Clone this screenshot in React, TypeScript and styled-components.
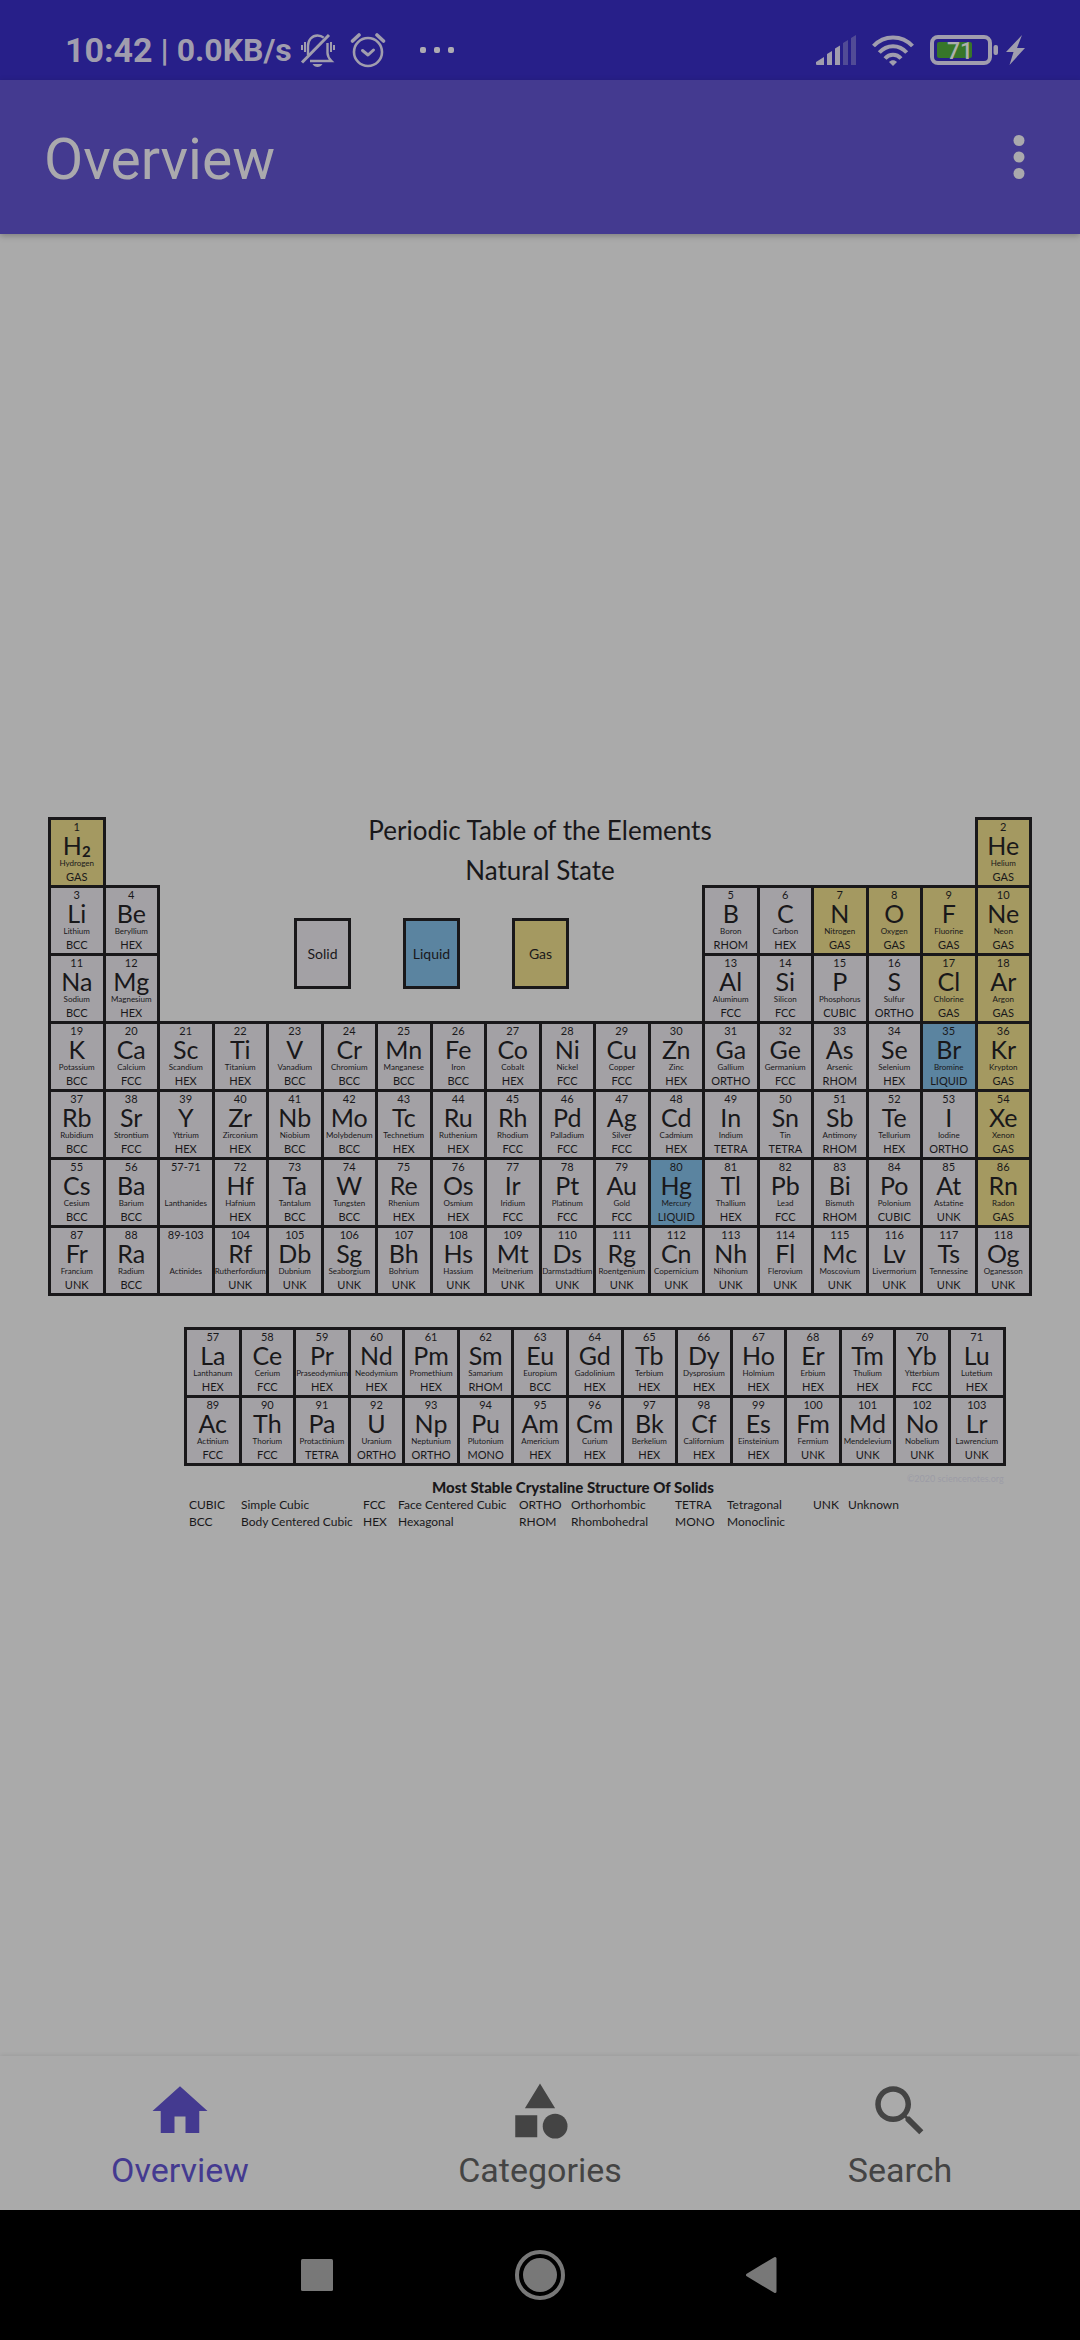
import React from "react";
import styled, { createGlobalStyle } from "styled-components";

type State = "solid" | "liquid" | "gas";

const fills: Record<State, string> = {
  solid: "#a3a1a5",
  liquid: "#5b84a0",
  gas: "#a49961",
};

const ink = "#19181a";
const accent = "#443a90";

const GlobalStyle = createGlobalStyle`
  * { box-sizing: border-box; }
  body { margin: 0; background: #aaaaaa; font-family: Roboto, "Liberation Sans", sans-serif; }
  button { margin: 0; padding: 0; border: 0; background: none; font: inherit; color: inherit; cursor: pointer; }
`;

const Screen = styled.div`
  display: flex;
  flex-direction: column;
  min-height: 100vh;
`;

const StatusBar = styled.div`
  display: flex;
  align-items: center;
  justify-content: space-between;
  height: 80px;
  padding: 20px 55px 0 65px;
  background: #271f89;
  color: #a09dae;
`;

const StatusGroup = styled.div<{ $gap: number }>`
  display: flex;
  align-items: center;
  gap: ${(p) => p.$gap}px;
  svg { display: block; }
`;

const Clock = styled.span`
  font-size: 34px;
  line-height: 40px;
  font-weight: 700;
`;

const Speed = styled.span`
  font-size: 32px;
  line-height: 40px;
  font-weight: 700;
`;

const AppBar = styled.header`
  z-index: 1;
  display: flex;
  align-items: center;
  justify-content: space-between;
  height: 154px;
  padding: 0 28px 0 44px;
  background: ${accent};
  color: #aaa9ad;
  box-shadow: 0 2px 6px rgba(0, 0, 0, 0.25);
`;

const Title = styled.h1`
  margin: 0;
  padding-top: 6px;
  font-size: 57px;
  line-height: 72px;
  font-weight: 400;
`;

const MenuButton = styled.button`
  display: flex;
  svg { display: block; }
`;

const Main = styled.main`
  flex: 1;
  display: flex;
  flex-direction: column;
  justify-content: center;
  padding: 56px 48px 0;
  font-family: Lato, "Liberation Sans", sans-serif;
  color: ${ink};
`;

const Elements = styled.table`
  width: 100%;
  table-layout: fixed;
  border-collapse: collapse;
`;

const Row = styled.tr`
  height: 68px;
`;

const Cell = styled.td<{ $state: State }>`
  padding: 0;
  border: 3px solid ${ink};
  background: ${(p) => fills[p.$state]};
  text-align: center;
  vertical-align: top;
  white-space: nowrap;
`;

const Blank = styled.td`
  padding: 0;
`;

const Num = styled.div`
  font-size: 11px;
  line-height: 13px;
`;

const Sym = styled.div`
  display: flex;
  align-items: flex-start;
  justify-content: center;
  font-size: 25px;
  line-height: 25px;
`;

const Count = styled.sub`
  padding-top: 12px;
  font-size: 15px;
  line-height: 13px;
  font-weight: 700;
`;

const Name = styled.div`
  font-size: 8px;
  line-height: 11px;
`;

const Kind = styled.div`
  font-size: 11px;
  line-height: 15px;
`;

const HeadingCell = styled(Blank)`
  vertical-align: top;
`;

const Heading = styled.h2`
  margin: 0;
  font-size: 26px;
  line-height: 25px;
  font-weight: 400;
  text-align: center;
  & + & { margin-top: 15px; }
`;

const Swatches = styled.div`
  display: flex;
  gap: 52px;
  padding-left: 134px;
`;

const Swatch = styled.div<{ $state: State }>`
  display: flex;
  align-items: center;
  justify-content: center;
  width: 57px;
  height: 71px;
  border: 3px solid ${ink};
  background: ${(p) => fills[p.$state]};
  font-size: 14px;
`;

const Series = styled.section`
  width: 83.5%;
  margin: 31px 0 0 136px;
`;

const Caption = styled.div`
  display: flex;
  align-items: flex-start;
  justify-content: space-between;
  padding: 6px 2px 0 248px;
`;

const CaptionTitle = styled.h3`
  margin: 0;
  padding-top: 6px;
  font-size: 15px;
  line-height: 18px;
  font-weight: 900;
`;

const Copyright = styled.small`
  font-size: 9px;
  line-height: 14px;
  color: #9c9ca6;
`;

const Glossary = styled.dl`
  display: grid;
  grid-template-columns: 52px 122px 35px 121px 52px 104px 52px 86px 35px auto;
  margin: 0;
  padding-left: 5px;
  font-size: 12px;
  line-height: 17px;
  white-space: nowrap;
  dd { margin: 0; }
`;

const BottomNav = styled.nav`
  display: grid;
  grid-template-columns: repeat(3, 1fr);
  height: 154px;
  background: #aaaaaa;
  box-shadow: 0 -1px 4px rgba(0, 0, 0, 0.08);
`;

const NavItem = styled.button<{ $active?: boolean }>`
  display: flex;
  flex-direction: column;
  align-items: center;
  padding-top: 22px;
  color: ${(p) => (p.$active ? accent : "#444444")};
  font-size: 34px;
  line-height: 40px;
  svg { display: block; margin-bottom: 6px; }
`;

const SystemNav = styled.div`
  display: flex;
  align-items: center;
  justify-content: center;
  gap: 170px;
  height: 130px;
  background: #000;
  color: #787878;
  svg { display: block; }
`;

// [number, symbol, name, structure]
type El = [string, string, string, string];

const parse = (text: string): El[] =>
  text
    .trim()
    .split(/\s+/)
    .map((item) => item.split("/") as El);

const period1 = parse("1/H/Hydrogen/GAS 2/He/Helium/GAS");
const period2 = parse(
  "3/Li/Lithium/BCC 4/Be/Beryllium/HEX 5/B/Boron/RHOM 6/C/Carbon/HEX 7/N/Nitrogen/GAS 8/O/Oxygen/GAS 9/F/Fluorine/GAS 10/Ne/Neon/GAS"
);
const period3 = parse(
  "11/Na/Sodium/BCC 12/Mg/Magnesium/HEX 13/Al/Aluminum/FCC 14/Si/Silicon/FCC 15/P/Phosphorus/CUBIC 16/S/Sulfur/ORTHO 17/Cl/Chlorine/GAS 18/Ar/Argon/GAS"
);
const longPeriods = [
  "19/K/Potassium/BCC 20/Ca/Calcium/FCC 21/Sc/Scandium/HEX 22/Ti/Titanium/HEX 23/V/Vanadium/BCC 24/Cr/Chromium/BCC 25/Mn/Manganese/BCC 26/Fe/Iron/BCC 27/Co/Cobalt/HEX 28/Ni/Nickel/FCC 29/Cu/Copper/FCC 30/Zn/Zinc/HEX 31/Ga/Gallium/ORTHO 32/Ge/Germanium/FCC 33/As/Arsenic/RHOM 34/Se/Selenium/HEX 35/Br/Bromine/LIQUID 36/Kr/Krypton/GAS",
  "37/Rb/Rubidium/BCC 38/Sr/Strontium/FCC 39/Y/Yttrium/HEX 40/Zr/Zirconium/HEX 41/Nb/Niobium/BCC 42/Mo/Molybdenum/BCC 43/Tc/Technetium/HEX 44/Ru/Ruthenium/HEX 45/Rh/Rhodium/FCC 46/Pd/Palladium/FCC 47/Ag/Silver/FCC 48/Cd/Cadmium/HEX 49/In/Indium/TETRA 50/Sn/Tin/TETRA 51/Sb/Antimony/RHOM 52/Te/Tellurium/HEX 53/I/Iodine/ORTHO 54/Xe/Xenon/GAS",
  "55/Cs/Cesium/BCC 56/Ba/Barium/BCC 57-71//Lanthanides/ 72/Hf/Hafnium/HEX 73/Ta/Tantalum/BCC 74/W/Tungsten/BCC 75/Re/Rhenium/HEX 76/Os/Osmium/HEX 77/Ir/Iridium/FCC 78/Pt/Platinum/FCC 79/Au/Gold/FCC 80/Hg/Mercury/LIQUID 81/Tl/Thallium/HEX 82/Pb/Lead/FCC 83/Bi/Bismuth/RHOM 84/Po/Polonium/CUBIC 85/At/Astatine/UNK 86/Rn/Radon/GAS",
  "87/Fr/Francium/UNK 88/Ra/Radium/BCC 89-103//Actinides/ 104/Rf/Rutherfordium/UNK 105/Db/Dubnium/UNK 106/Sg/Seaborgium/UNK 107/Bh/Bohrium/UNK 108/Hs/Hassium/UNK 109/Mt/Meitnerium/UNK 110/Ds/Darmstadtium/UNK 111/Rg/Roentgenium/UNK 112/Cn/Copernicium/UNK 113/Nh/Nihonium/UNK 114/Fl/Flerovium/UNK 115/Mc/Moscovium/UNK 116/Lv/Livermorium/UNK 117/Ts/Tennessine/UNK 118/Og/Oganesson/UNK",
].map(parse);
const series = [
  "57/La/Lanthanum/HEX 58/Ce/Cerium/FCC 59/Pr/Praseodymium/HEX 60/Nd/Neodymium/HEX 61/Pm/Promethium/HEX 62/Sm/Samarium/RHOM 63/Eu/Europium/BCC 64/Gd/Gadolinium/HEX 65/Tb/Terbium/HEX 66/Dy/Dysprosium/HEX 67/Ho/Holmium/HEX 68/Er/Erbium/HEX 69/Tm/Thulium/HEX 70/Yb/Ytterbium/FCC 71/Lu/Lutetium/HEX",
  "89/Ac/Actinium/FCC 90/Th/Thorium/FCC 91/Pa/Protactinium/TETRA 92/U/Uranium/ORTHO 93/Np/Neptunium/ORTHO 94/Pu/Plutonium/MONO 95/Am/Americium/HEX 96/Cm/Curium/HEX 97/Bk/Berkelium/HEX 98/Cf/Californium/HEX 99/Es/Einsteinium/HEX 100/Fm/Fermium/UNK 101/Md/Mendelevium/UNK 102/No/Nobelium/UNK 103/Lr/Lawrencium/UNK",
].map(parse);

const glossary: [string, string][] = [
  ["CUBIC", "Simple Cubic"],
  ["FCC", "Face Centered Cubic"],
  ["ORTHO", "Orthorhombic"],
  ["TETRA", "Tetragonal"],
  ["UNK", "Unknown"],
  ["BCC", "Body Centered Cubic"],
  ["HEX", "Hexagonal"],
  ["RHOM", "Rhombohedral"],
  ["MONO", "Monoclinic"],
];

const stateOf = (kind: string): State =>
  kind === "GAS" ? "gas" : kind === "LIQUID" ? "liquid" : "solid";

function ElementCell({ el: [num, sym, name, kind] }: { el: El }) {
  return (
    <Cell $state={stateOf(kind)}>
      <Num>{num}</Num>
      <Sym>
        {sym || "\u00a0"}
        {sym === "H" && <Count>2</Count>}
      </Sym>
      <Name>{name}</Name>
      <Kind>{kind}</Kind>
    </Cell>
  );
}

const cells = (els: El[]) => els.map((el) => <ElementCell key={el[0]} el={el} />);

function BellOffIcon() {
  return (
    <svg width="36" height="34" viewBox="0 0 36 34" fill="none" stroke="currentColor" strokeWidth="2.4">
      <path d="M8 22V13c0-6 4-10.500 9.500-10.500 2.500 0 4.600.8 6.200 2.200M27.500 10v10c0 4 1.500 5.500 4 8H10" />
      <path d="M2 29.500 29 2" strokeWidth="3" />
      <path d="M12.500 31h10c-1 2-3 3-5 3s-4-1-5-3z" fill="currentColor" stroke="none" />
      <path d="M5 9v10M2 12v5M31 9v10M34 12v5" strokeWidth="2" />
    </svg>
  );
}

function AlarmIcon() {
  return (
    <svg width="36" height="36" viewBox="0 0 36 36" fill="none" stroke="currentColor" strokeWidth="2.600" strokeLinecap="round" strokeLinejoin="round">
      <circle cx="18" cy="20" r="14" />
      <path d="M12.500 18.500l5.500 4.500 5.500-5" strokeWidth="3" />
      <path d="M2.500 9 9 3M27 3l6.500 6" strokeWidth="3.600" />
    </svg>
  );
}

function MoreDots() {
  return (
    <svg width="34" height="6" viewBox="0 0 34 6" fill="#adabb2">
      <rect width="6" height="6" rx="2" />
      <rect x="14" width="6" height="6" rx="2" />
      <rect x="28" width="6" height="6" rx="2" />
    </svg>
  );
}

function SignalIcon() {
  return (
    <svg width="40" height="30" viewBox="0 0 40 30" fill="currentColor">
      <path d="M0 27l8-5v8H1q-1 0-1-1zM11 19l5-3v14h-5zM19 13.500l5-3V30h-5z" />
      <path d="M27 8l5-3v25h-5zM35 3l5-3v30h-5z" opacity="0.350" />
    </svg>
  );
}

function WifiIcon() {
  return (
    <svg width="42" height="31" viewBox="0 0 42 31" fill="none" stroke="currentColor" strokeWidth="4">
      <path d="M1.500 11C12 -.5 30 -.5 40.500 11" />
      <path d="M7.300 17.500c7.600-8.500 19.800-8.500 27.400 0" />
      <path d="M13 23.500c4.500-5 11.500-5 16 0" />
      <path d="M17 27c2.400-2.500 5.600-2.500 8 0l-4 4z" fill="currentColor" stroke="none" />
    </svg>
  );
}

function BatteryIcon() {
  return (
    <svg width="68" height="30" viewBox="0 0 68 30">
      <rect x="2" y="2" width="58" height="26" rx="6" fill="none" stroke="currentColor" strokeWidth="4" />
      <rect x="7" y="7" width="35" height="16" rx="2" fill="#37762a" />
      <rect x="63.500" y="10" width="4.500" height="10" rx="2" fill="currentColor" />
      <text x="30" y="24" textAnchor="middle" fontFamily="Roboto, sans-serif" fontSize="23" fontWeight="500" fill="#adb0ae">71</text>
    </svg>
  );
}

function BoltIcon() {
  return (
    <svg width="19" height="30" viewBox="0 0 19 30" fill="currentColor">
      <path d="M16 0 0 17h7.500L3.500 30 19 13h-8z" />
    </svg>
  );
}

export default function App() {
  return (
    <Screen>
      <GlobalStyle />
      <StatusBar>
        <StatusGroup $gap={34}>
          <StatusGroup $gap={14}>
            <StatusGroup $gap={8}>
              <Clock>10:42</Clock>
              <Speed>| 0.0KB/s</Speed>
              <BellOffIcon />
            </StatusGroup>
            <AlarmIcon />
          </StatusGroup>
          <MoreDots />
        </StatusGroup>
        <StatusGroup $gap={16}>
          <SignalIcon />
          <WifiIcon />
          <StatusGroup $gap={8}>
            <BatteryIcon />
            <BoltIcon />
          </StatusGroup>
        </StatusGroup>
      </StatusBar>

      <AppBar>
        <Title>Overview</Title>
        <MenuButton aria-label="More options">
          <svg width="66" height="66" viewBox="0 0 24 24" fill="currentColor">
            <circle cx="12" cy="6" r="2" />
            <circle cx="12" cy="12" r="2" />
            <circle cx="12" cy="18" r="2" />
          </svg>
        </MenuButton>
      </AppBar>

      <Main>
        <Elements>
          <tbody>
            <Row>
              {cells(period1.slice(0, 1))}
              <HeadingCell colSpan={16}>
                <Heading>Periodic Table of the Elements</Heading>
                <Heading as="p">Natural State</Heading>
              </HeadingCell>
              {cells(period1.slice(1))}
            </Row>
            <Row>
              {cells(period2.slice(0, 2))}
              <Blank colSpan={10} rowSpan={2}>
                <Swatches>
                  <Swatch $state="solid">Solid</Swatch>
                  <Swatch $state="liquid">Liquid</Swatch>
                  <Swatch $state="gas">Gas</Swatch>
                </Swatches>
              </Blank>
              {cells(period2.slice(2))}
            </Row>
            <Row>{cells(period3)}</Row>
            {longPeriods.map((els) => (
              <Row key={els[0][0]}>{cells(els)}</Row>
            ))}
          </tbody>
        </Elements>

        <Series>
          <Elements>
            <tbody>
              {series.map((els) => (
                <Row key={els[0][0]}>{cells(els)}</Row>
              ))}
            </tbody>
          </Elements>
          <Caption>
            <CaptionTitle>Most Stable Crystaline Structure Of Solids</CaptionTitle>
            <Copyright>©2020 sciencenotes.org</Copyright>
          </Caption>
          <Glossary>
            {glossary.map(([term, meaning]) => (
              <React.Fragment key={term}>
                <dt>{term}</dt>
                <dd>{meaning}</dd>
              </React.Fragment>
            ))}
          </Glossary>
        </Series>
      </Main>

      <BottomNav>
        <NavItem $active aria-current="page">
          <svg width="66" height="66" viewBox="0 0 24 24" fill="currentColor">
            <path d="M10 20v-6h4v6h5v-8h3L12 3 2 12h3v8z" />
          </svg>
          Overview
        </NavItem>
        <NavItem>
          <svg width="66" height="66" viewBox="0 0 24 24" fill="currentColor">
            <path d="M12 2l-5.500 9h11zM3 13.500h8v8H3z" />
            <circle cx="17.500" cy="17.500" r="4.500" />
          </svg>
          Categories
        </NavItem>
        <NavItem>
          <svg width="66" height="66" viewBox="0 0 24 24" fill="currentColor">
            <path d="M15.500 14h-.79l-.28-.27C15.410 12.590 16 11.110 16 9.500 16 5.910 13.090 3 9.500 3S3 5.910 3 9.500 5.910 16 9.500 16c1.610 0 3.090-.59 4.230-1.570l.27.28v.79l5 4.990L20.490 19l-4.990-5zm-6 0C7.010 14 5 11.990 5 9.500S7.010 5 9.500 5 14 7.010 14 9.500 11.990 14 9.500 14z" />
          </svg>
          Search
        </NavItem>
      </BottomNav>

      <SystemNav>
        <button aria-label="Recent apps">
          <svg width="52" height="52" viewBox="0 0 52 52" fill="currentColor">
            <rect x="9" y="10" width="32" height="32" rx="1.500" />
          </svg>
        </button>
        <button aria-label="Home">
          <svg width="52" height="52" viewBox="0 0 52 52" fill="currentColor">
            <circle cx="26" cy="26" r="23" fill="none" stroke="currentColor" strokeWidth="4" />
            <circle cx="26" cy="26" r="17" />
          </svg>
        </button>
        <button aria-label="Back">
          <svg width="52" height="52" viewBox="0 0 52 52" fill="currentColor" stroke="currentColor" strokeWidth="3" strokeLinejoin="round">
            <path d="M11.500 26 39 9.500v33z" />
          </svg>
        </button>
      </SystemNav>
    </Screen>
  );
}
